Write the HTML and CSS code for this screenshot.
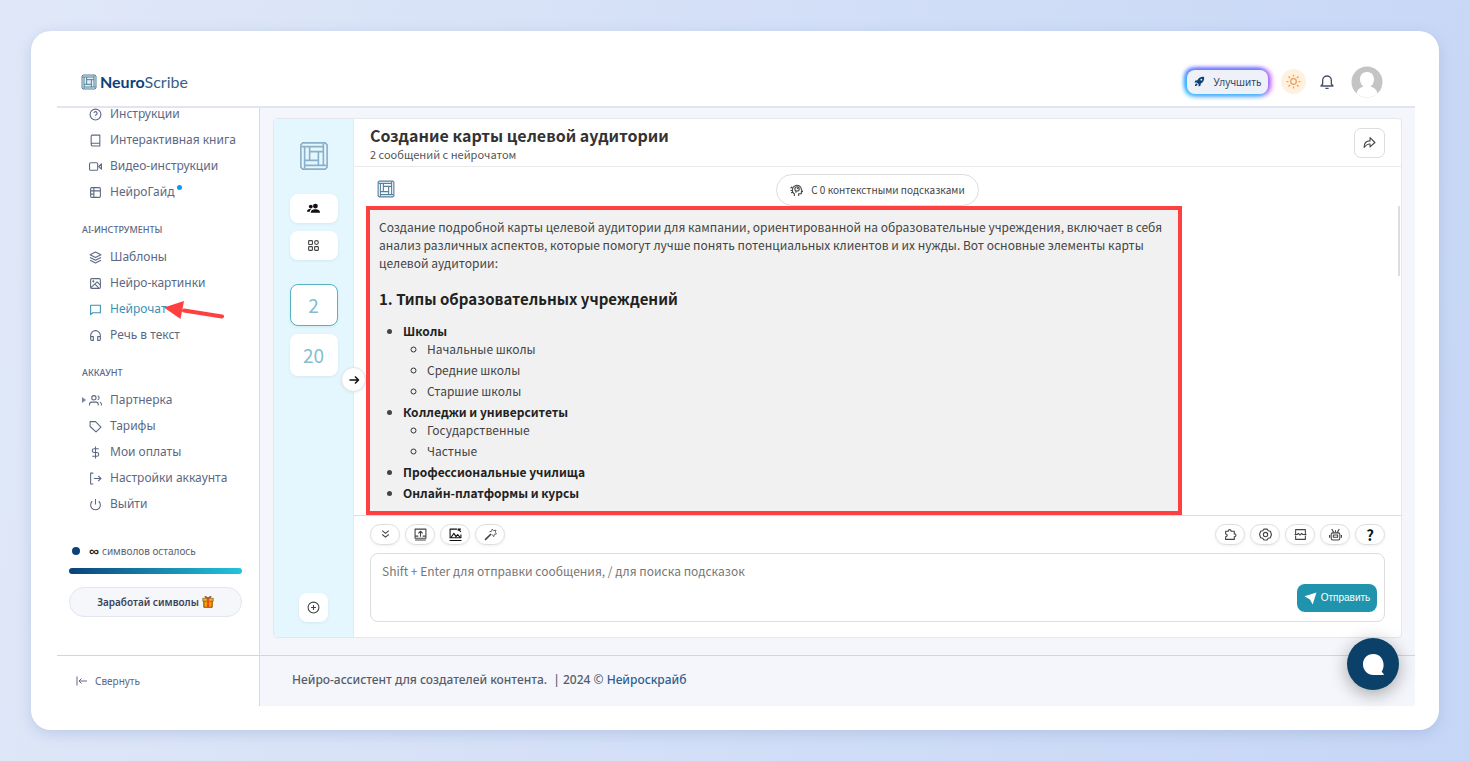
FILE: index.html
```html
<!DOCTYPE html>
<html lang="ru">
<head>
<meta charset="utf-8">
<title>NeuroScribe</title>
<link rel="stylesheet" href="styles.css">
</head>
<body>
<svg class="defs" aria-hidden="true">
  <symbol id="logo" viewBox="0 0 24 24">
    <path d="M3 1.500H21L22.500 3V21L21 22.500H3L1.500 21V3Z"/>
    <g id="q"><path d="M4.500 22V4.500M8.500 15.500V4.500"/></g>
    <use href="#q" transform="rotate(90 12 12)"/><use href="#q" transform="rotate(180 12 12)"/><use href="#q" transform="rotate(270 12 12)"/>
  </symbol>
</svg>
<div class="frame">
  <div class="app">
    <header class="topbar">
      <a class="brand" href="#"><svg class="brand-logo" viewBox="0 0 24 24"><use href="#logo"/></svg><span><b>Neuro</b>Scribe</span></a>
      <div class="top-actions">
        <button class="upgrade"><svg viewBox="0 0 24 24"><path d="M22 2C15 1 10 5 7.500 9L3 10 1 14 6 14 10 18 10 23 14 21 15 16.500C20 13 23 9 22 2Z"/><circle cx="16" cy="8" r="2" fill="#eef2f8"/><path d="M5 16C3 17 2 20 2 22 4 22 7 21 8 19Z"/></svg>Улучшить</button>
        <button class="theme" aria-label="Тема"><svg class="line" viewBox="0 0 24 24"><circle cx="12" cy="12" r="4.500"/><path d="M12 1v3M12 20V23M1 12h3M20 12H23M4 4l2.500 2.500M17.500 17.500 20 20M4 20l2.500-2.500M17.500 6.500 20 4"/></svg></button>
        <button class="bell" aria-label="Уведомления"><svg class="line" viewBox="0 0 24 24"><path d="M3 18H21L18.500 15V9.500A6.500 6.500 0 0 0 5.500 9.500V15ZM9.500 21.500H14.500"/></svg></button>
        <button class="avatar" aria-label="Профиль"><svg viewBox="0 0 32 32"><circle cx="16" cy="16" r="15.500" fill="#c4c4c4"/><path d="M16 6C11.500 6 9 9 9 13.500 9 17 11 19.500 12.500 20.500 9 21.500 6 24 5.500 27.500A15.500 15.500 0 0 0 26.500 27.500C26 24 23 21.500 19.500 20.500 21 19.500 23 17 23 13.500 23 9 20.500 6 16 6Z" fill="#fff"/></svg></button>
      </div>
    </header>
    <div class="columns">
      <aside class="sidebar">
        <nav class="nav">
          <a href="#"><svg class="line" viewBox="0 0 24 24"><circle cx="12" cy="12" r="10"/><path d="M9 9a3 3 0 1 1 4 3.500c-1 .5-1 1-1 2M12 17v.5"/></svg>Инструкции</a>
          <a href="#"><svg class="line" viewBox="0 0 24 24"><path d="M4 19V4a2 2 0 0 1 2-2H20V22H6.500A2.500 2.500 0 0 1 4 19.500 2.500 2.500 0 0 1 6.500 17H20"/></svg>Интерактивная книга</a>
          <a href="#"><svg class="line" viewBox="0 0 24 24"><rect x="1" y="5" width="15" height="14" rx="2"/><path d="M23 7l-5 5 5 5z"/></svg>Видео-инструкции</a>
          <a href="#"><svg class="line" viewBox="0 0 24 24"><rect x="3" y="3" width="18" height="18" rx="2"/><path d="M3 9H21M9 3V21M3 15H9"/></svg>НейроГайд<i class="dot"></i></a>
          <h2>AI-ИНСТРУМЕНТЫ</h2>
          <a href="#"><svg class="line" viewBox="0 0 24 24"><path d="M12 2 2 7l10 5 10-5ZM2 12l10 5 10-5M2 17l10 5 10-5"/></svg>Шаблоны</a>
          <a href="#"><svg class="line" viewBox="0 0 24 24"><rect x="3" y="3" width="18" height="18" rx="2"/><circle cx="8" cy="8" r="1"/><path d="M3 20 15 9l6 6M11 13l7 7"/></svg>Нейро-картинки</a>
          <a href="#" class="active"><svg class="line" viewBox="0 0 24 24"><path d="M3 4H21V18H7L3 21.500Z"/></svg>Нейрочат</a>
          <a href="#"><svg class="line" viewBox="0 0 24 24"><path d="M3 18V12a9 9 0 0 1 18 0V18M21 19a2 2 0 0 1-2 2H16V14H21ZM3 19a2 2 0 0 0 2 2H8V14H3Z"/></svg>Речь в текст</a>
          <h2>АККАУНТ</h2>
          <a href="#" class="parent"><svg class="line" viewBox="0 0 24 24"><path d="M17 21V19a4 4 0 0 0-4-4H5a4 4 0 0 0-4 4V21M23 21V19a4 4 0 0 0-3-3.800M16 3.200a4 4 0 0 1 0 7.600"/><circle cx="9" cy="7" r="4"/></svg>Партнерка</a>
          <a href="#"><svg class="line" viewBox="0 0 24 24"><path d="M2 3H12L22 13 13 22 2 12ZM7 8v.5"/></svg>Тарифы</a>
          <a href="#"><svg class="line" viewBox="0 0 24 24"><path d="M12 1V23M18 5H9.500a3.500 3.500 0 0 0 0 7H14.500a3.500 3.500 0 0 1 0 7H6"/></svg>Мои оплаты</a>
          <a href="#"><svg class="line" viewBox="0 0 24 24"><path d="M8 2H3V22H8M9 12H22M17 7l5 5-5 5"/></svg>Настройки аккаунта</a>
          <a href="#"><svg class="line" viewBox="0 0 24 24"><path d="M18 6a9 9 0 1 1-12 0M12 2V12"/></svg>Выйти</a>
        </nav>
        <section class="quota">
          <p><i></i><b>∞</b> символов осталось</p>
          <div class="bar"></div>
          <button>Заработай символы <svg viewBox="0 0 16 16"><path d="M2 6H14V15H2Z" fill="#f9a602"/><path d="M1 3H15V7H1Z" fill="#f5b21a" stroke="#5c3818" stroke-width=".7"/><path d="M2.500 7V15H13.500V7M8 3C4-2 1 2 8 3ZM8 3C12-2 15 2 8 3Z" fill="none" stroke="#743c16" stroke-width="1.200"/><path d="M6.500 3H9.500V15H6.500Z" fill="#ed4a20"/></svg></button>
        </section>
        <button class="collapse"><svg class="line" viewBox="0 0 24 24"><path d="M2 3V21M22 12H6M11 7l-5 5 5 5"/></svg>Свернуть</button>
      </aside>
      <main class="main">
        <section class="chat">
          <div class="rail">
            <svg class="rail-logo" viewBox="0 0 24 24"><use href="#logo"/></svg>
            <button class="rail-btn" aria-label="Персоны"><svg viewBox="0 0 24 24" fill="#111"><circle cx="15.500" cy="7.500" r="4.500"/><circle cx="7" cy="8.500" r="3.500"/><path d="M7 20C7 15 11 13.500 15.500 13.500S24 15 24 20ZM0 18C0 14 3 13 8 13Q5 15 5 18Z"/></svg></button>
            <button class="rail-btn grid-btn" aria-label="Каталог"><svg class="line" viewBox="0 0 24 24"><rect x="3" y="3" width="7" height="7" rx="1"/><circle cx="17.500" cy="6.500" r="3.500"/><rect x="3" y="14" width="7" height="7" rx="1"/><rect x="14" y="14" width="7" height="7" rx="1"/></svg></button>
            <button class="count current">2</button>
            <button class="count">20</button>
            <button class="add" aria-label="Новый чат"><svg class="line" viewBox="0 0 24 24"><circle cx="12" cy="12" r="10"/><path d="M12 7.500V16.500M7.500 12H16.500"/></svg></button>
            <button class="expand" aria-label="Развернуть"><svg class="line" viewBox="0 0 24 24"><path d="M3 12H21M14 5l7 7-7 7"/></svg></button>
          </div>
          <div class="talk">
            <header class="talk-head">
              <div><h1>Создание карты целевой аудитории</h1><p>2 сообщений с нейрочатом</p></div>
              <button class="share" aria-label="Поделиться"><svg class="line" viewBox="0 0 24 24"><path d="M13 3L22 12 13 20V15C9 14 6 16 2 21 2 14 6 9 13 9Z"/></svg></button>
            </header>
            <div class="messages">
              <div class="msg-top">
                <svg class="msg-logo" viewBox="0 0 24 24"><use href="#logo"/></svg>
                <button class="context"><svg class="line" viewBox="0 0 24 24"><path d="M8 22V18C3 15 3 7 8 4 14 0 21 4 21 10L23 14H21V18H16V22M1 8 4 5M1 12H4M2 16l3-1"/><circle cx="13" cy="9" r="4"/><path d="M13 9l3-3M11 13v3"/></svg>С 0 контекстными подсказками</button>
              </div>
              <article class="bubble">
                <p>Создание подробной карты целевой аудитории для кампании, ориентированной на образовательные учреждения, включает в себя анализ различных аспектов, которые помогут лучше понять потенциальных клиентов и их нужды. Вот основные элементы карты целевой аудитории:</p>
                <h3>1. Типы образовательных учреждений</h3>
                <ul>
                  <li><b>Школы</b><ul><li>Начальные школы</li><li>Средние школы</li><li>Старшие школы</li></ul></li>
                  <li><b>Колледжи и университеты</b><ul><li>Государственные</li><li>Частные</li></ul></li>
                  <li><b>Профессиональные училища</b></li>
                  <li><b>Онлайн-платформы и курсы</b></li>
                </ul>
              </article>
              <span class="scroll-thumb"></span>
            </div>
            <form class="composer">
              <div class="tools">
                <button type="button" aria-label="Свернуть панель"><svg class="line" viewBox="0 0 24 24"><path d="M6 5l6 5 6-5M6 12l6 5 6-5"/></svg></button>
                <button type="button" aria-label="Загрузить"><svg class="line" viewBox="0 0 24 24"><rect x="2" y="2" width="20" height="17"/><path d="M2 22H22M12 16V6M8 10l4-4 4 4M2 15H8M16 15H22"/></svg></button>
                <button type="button" class="dark" aria-label="Изображение"><svg class="line" viewBox="0 0 24 24"><path d="M15 2H2V18H22V12M1 23H23M4 17l5-7 4 6 3-4 4 5M17 2l5 5M22 2H17V5"/></svg></button>
                <button type="button" aria-label="Волшебная палочка"><svg class="line wand" viewBox="0 0 24 24"><path d="M2 22 13 11" stroke-width="3"/><path d="M10 7l4-1 1-4 3 3 4-1-1 4 2 3-4 1-1 4-3-4"/></svg></button>
                <span></span>
                <button type="button" aria-label="Плагины"><svg class="line" viewBox="0 0 24 24"><path d="M3 6H8C7 2 14 2 13 6H19V11C23 10 23 17 19 16V21H3V16C7 16 7 11 3 11Z"/></svg></button>
                <button type="button" aria-label="Настройки"><svg class="line" viewBox="0 0 24 24"><path d="M9 2H15L17 5 21 6 23 12 21 18 17 19 15 22H9L7 19 3 18 1 12 3 6 7 5Z"/><circle cx="12" cy="12" r="4"/></svg></button>
                <button type="button" aria-label="Страница"><svg class="line" viewBox="0 0 24 24"><path d="M3 11V3H21V11M3 14V21H21V14M1 12H6L8 10 11 13 14 10 16 12H23"/></svg></button>
                <button type="button" aria-label="Бот"><svg class="line" viewBox="0 0 24 24"><rect x="4" y="9" width="16" height="13" rx="3"/><rect x="8" y="13" width="8" height="4"/><path d="M9 9 5 2M15 9l4-7M12 8V4M1 13V18M23 13V18"/></svg></button>
                <button type="button" class="dark help" aria-label="Помощь">?</button>
              </div>
              <div class="input">
                <textarea aria-label="Сообщение" placeholder="Shift + Enter для отправки сообщения, / для поиска подсказок"></textarea>
                <button class="send"><svg viewBox="0 0 24 24"><path d="M23 1 16 23 11 14 1 8Z" fill="#fff"/></svg>Отправить</button>
              </div>
            </form>
          </div>
        </section>
        <footer class="footer">Нейро-ассистент для создателей контента. &nbsp;| 2024 © <a href="#">Нейроскрайб</a></footer>
      </main>
    </div>
    <button class="support" aria-label="Чат поддержки"><svg viewBox="0 0 24 24"><path d="M12 1C5 1 1 6 1 12S6 23 12 23H22C23 23 23 22 22 21L20.500 19.500C25 13 22 1 12 1Z" fill="#fff"/></svg></button>
    <svg class="pointer" viewBox="0 0 60 24" aria-hidden="true"><path d="M58 16.500 20 10.500" stroke="#ff4040" stroke-width="4" stroke-linecap="round"/><path d="M0 7.500 20 1 16.500 19Z" fill="#ff4040"/></svg>
  </div>
</div>
</body>
</html>
```
FILE: styles.css
```css
* { box-sizing: border-box; }
body {
  margin: 0;
  min-height: 100vh;
  padding: 31px;
  display: flex;
  background: linear-gradient(100deg, #e0e8f8, #c6d6f6);
  font: 12px/18px "Noto Sans", sans-serif;
  color: #5d6883;
}
h1, h2, h3, p, ul { margin: 0; }
a { color: inherit; text-decoration: none; }
button { font: inherit; color: inherit; border: 0; background: none; padding: 0; cursor: pointer; display: flex; align-items: center; justify-content: center; }
svg { display: block; flex: none; }
.defs { position: absolute; width: 0; height: 0; }
.line { fill: none; stroke: currentColor; stroke-width: 2; stroke-linejoin: round; }

.frame { flex: 1; display: flex; padding: 26px 24px 24px 26px; border-radius: 20px; background: #fff; box-shadow: 0 4px 14px #8fa4cf66; }
.app { flex: 1; min-width: 0; display: flex; flex-direction: column; position: relative; }

.topbar { height: 51px; border-bottom: 2px solid #e2e5ef; display: flex; justify-content: space-between; align-items: center; padding: 0 32px 0 24px; }
.brand { display: flex; align-items: center; gap: 3px; font: 16px/22px Lato, sans-serif; color: #35608a; }
.brand b { color: #0c4278; }
.brand-logo { width: 16px; height: 16px; fill: #e3edf2; stroke: #54809b; stroke-width: 1.500; }
.top-actions { display: flex; align-items: center; }
.upgrade { height: 24px; width: 81px; gap: 9px; border-radius: 8px; background: #eef2f8; font-size: 10px; color: #33476b; box-shadow: -2px 2px 5px #23c8ff, -2px -2px 4px #5470ff, 2px 0 5px 1px #c44dff; }
.upgrade svg { width: 11px; height: 11px; fill: #0c4278; }
.theme { margin-left: 13px; width: 25px; height: 25px; border-radius: 50%; background: #fff1de; color: #f59b4c; }
.theme svg { width: 15px; height: 15px; }
.bell { margin-left: 13px; color: #485068; }
.bell svg { width: 16px; height: 16px; }
.avatar { margin-left: 16px; }
.avatar svg { width: 32px; height: 32px; }

.columns { flex: 1; display: flex; min-height: 0; }
.sidebar { width: 203px; flex: none; border-right: 1px solid #d6d9e6; display: flex; flex-direction: column; overflow: hidden; }
.nav { margin-top: -7px; }
.nav a { display: flex; align-items: center; height: 26px; padding-left: 32px; gap: 8px; position: relative; }
.nav svg { width: 13px; height: 13px; }
.nav h2 { height: 39px; padding: 16px 0 0 25px; font-size: 9px; line-height: 18px; font-weight: 500; }
.nav .active { color: #3b91b5; }
.dot { width: 5px; height: 5px; border-radius: 50%; background: #0a9bf5; align-self: flex-start; margin: 6px 0 0 -5px; }
.parent::before { content: ""; position: absolute; left: 25px; border: 3px solid transparent; border-left: 4px solid #7c879f; border-right: 0; }
.quota { padding: 25px 17px 0 12px; margin-bottom: auto; }
.quota p { display: flex; align-items: center; gap: 3px; font-size: 10px; color: #5a6270; }
.quota p b { font-size: 14px; color: #222; }
.quota i { width: 8px; height: 8px; border-radius: 50%; background: #0b4379; margin: 0 6px 0 3px; }
.bar { height: 6px; border-radius: 3px; margin: 8px 0 13px; background: linear-gradient(90deg, #0b4379, #23c4dc); }
.quota button { width: 100%; height: 30px; border: 1px solid #e2e6ee; border-radius: 15px; background: #f5f7fb; font-size: 10px; font-weight: 600; color: #3c4257; gap: 3px; }
.quota button svg { width: 12px; height: 12px; }
.collapse { height: 51px; border-top: 1px solid #d0d4e4; justify-content: flex-start; padding-left: 19px; gap: 7px; font-size: 10px; }
.collapse svg { width: 12px; height: 12px; }

.main { flex: 1; min-width: 0; display: flex; flex-direction: column; background: #f5f6fb; }
.chat { flex: 1; min-height: 0; margin: 10px 13px 17px; display: flex; background: #fff; border: 1px solid #e3e8ef; border-radius: 4px; font-family: "Noto Sans CJK SC", sans-serif; color: #444; }
.footer { height: 51px; border-top: 1px solid #d0d4e4; padding: 0 32px; font-size: 12px; line-height: 48px; font-weight: 500; color: #555d6b; }
.footer a { color: #2e5f91; }

.rail { width: 80px; flex: none; display: flex; flex-direction: column; align-items: center; background: #e5f7fe; border-right: 1px solid #d8edf4; padding: 22px 0 15px; position: relative; }
.rail-logo { width: 30px; height: 30px; fill: none; stroke: #8aafc9; stroke-width: 1.300; margin-bottom: 23px; }
.rail button { background: #fff; box-shadow: 0 1px 3px #9fc4d244; }
.rail-btn { width: 48px; height: 29px; border-radius: 8px; margin-bottom: 8px; }
.rail-btn svg { width: 13px; height: 13px; }
.grid-btn { margin-bottom: 24px; color: #444; }
.rail .count { width: 48px; height: 42px; border-radius: 8px; font-size: 19px; color: #83bfce; margin-bottom: 8px; }
.rail .current { border: 1px solid #57b3c2; }
.add { width: 29px; height: 29px; border-radius: 8px; margin-top: auto; color: #444; }
.add svg { width: 13px; height: 13px; }
.rail .expand { position: absolute; right: -13px; top: 248px; width: 25px; height: 25px; border-radius: 50%; border: 1px solid #e2e2e2; color: #111; }
.expand svg { width: 12px; height: 12px; stroke-width: 3; }

.talk { flex: 1; min-width: 0; display: flex; flex-direction: column; }
.talk-head { height: 48px; display: flex; justify-content: space-between; align-items: center; padding: 0 16px; border-bottom: 1px solid #e9e9e9; }
h1 { font-size: 16px; line-height: 22px; font-weight: 700; color: #333; }
.talk-head p { font-size: 11px; line-height: 16px; color: #555; }
.share { width: 31px; height: 30px; border: 1px solid #ddd; border-radius: 7px; color: #444; }
.share svg { width: 13px; height: 13px; }
.messages { flex: 1; min-height: 0; display: flex; flex-direction: column; padding: 0 219px 0 12px; position: relative; }
.msg-top { height: 39px; display: flex; align-items: center; justify-content: space-between; padding-left: 11px; }
.msg-logo { width: 18px; height: 18px; fill: none; stroke: #54809b; stroke-width: 1.500; margin-top: 4px; }
.context { width: 203px; height: 32px; margin: 7px 203px 0 0; border: 1px solid #ddd; border-radius: 16px; gap: 8px; font-size: 10px; }
.context svg { width: 13px; height: 13px; }
.bubble { flex: 1; min-height: 0; border: 4px solid #ff4040; background: #f1f1f1; padding: 8px 12px 4px 9px; overflow: hidden; position: relative; }
.bubble h3 { font-size: 15px; line-height: 22px; margin: 16px 0 12px; color: #222; }
.bubble ul { padding-left: 24px; }
.bubble li { margin-bottom: 3px; }
.bubble b { color: #222; }
.bubble li li::marker { color: #333; }
.scroll-thumb { position: absolute; right: 1px; top: 39px; width: 2px; height: 70px; background: #ddd; }

.composer { border-top: 1px solid #ddd; padding: 8px 16px 15px; }
.tools { display: flex; gap: 5px; margin-bottom: 8px; }
.tools span { flex: 1; }
.tools button { width: 30px; height: 21px; border: 1px solid #ddd; border-radius: 11px; color: #444; box-shadow: 0 1px 3px #0001; }
.tools svg { width: 13px; height: 13px; }
.tools .wand { stroke-width: 1.500; }
.tools .dark { color: #111; }
.tools .help { font-size: 15px; font-weight: 700; }
.input { height: 69px; border: 1px solid #ddd; border-radius: 8px; display: flex; align-items: flex-end; padding: 8px 7px 9px 11px; }
textarea { flex: 1; align-self: stretch; border: 0; padding: 0; resize: none; outline: 0; background: none; font: inherit; }
textarea::placeholder { color: #777; opacity: 1; }
.send { width: 80px; height: 28px; border-radius: 8px; background: #1f94ac; color: #fff; gap: 4px; font: 10px/14px "Liberation Sans", sans-serif; }
.send svg { width: 13px; height: 13px; }

.support { position: absolute; right: 16px; bottom: 16px; width: 52px; height: 52px; border-radius: 50%; background: #0b4168; box-shadow: 0 4px 18px #0005; }
.support svg { width: 23px; height: 23px; }
.pointer { position: absolute; left: 107px; top: 243px; width: 60px; height: 24px; fill: none; }
```
